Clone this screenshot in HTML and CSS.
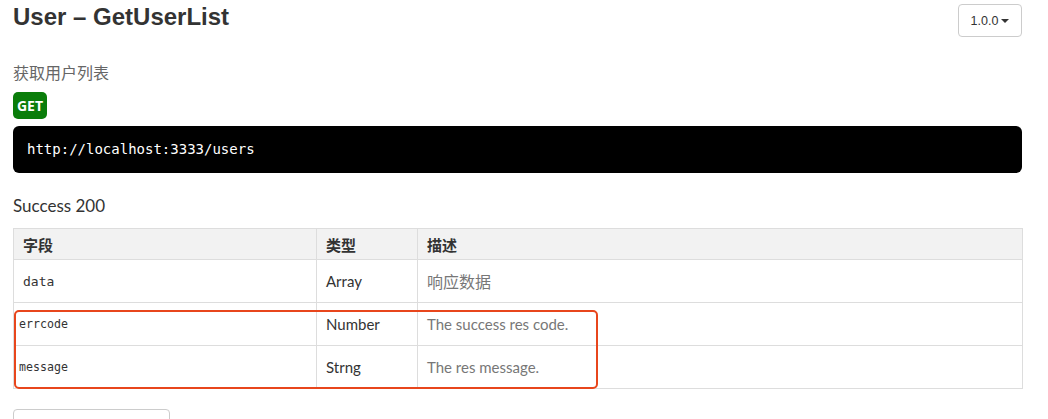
FILE: index.html
```html
<!DOCTYPE html>
<html>
<head>
<meta charset="utf-8">
<link rel="stylesheet" href="styles.css">
</head>
<body>
<div class="page">
  <div class="head">
    <h1 class="title">User – GetUserList</h1>
    <div class="version">1.0.0<span class="caret"></span></div>
  </div>
  <p class="desc">获取用户列表</p>
  <span class="badge">GET</span>
  <pre class="url">http://localhost:3333/users</pre>
  <h2 class="section">Success 200</h2>
  <div class="table-wrap">
    <table class="fields">
      <colgroup><col class="c1"><col class="c2"><col class="c3"></colgroup>
      <thead>
        <tr><th>字段</th><th>类型</th><th>描述</th></tr>
      </thead>
      <tbody>
        <tr><td class="code">data</td><td class="type">Array</td><td class="note cjk">响应数据</td></tr>
        <tr><td class="code small">errcode</td><td class="type">Number</td><td class="note">The success res code.</td></tr>
        <tr><td class="code small">message</td><td class="type">Strng</td><td class="note">The res message.</td></tr>
      </tbody>
    </table>
    <div class="highlight"></div>
  </div>
  <div class="next-btn"></div>
</div>
</body>
</html>
```
FILE: styles.css
```css
html, body { margin: 0; padding: 0; background: #fff; }
body { font-family: "Lato", "Noto Sans CJK SC", sans-serif; color: #333; }
.page { margin-left: 13px; width: 1009px; }
.head { display: flex; justify-content: space-between; align-items: flex-start; height: 52px; }
.title { margin: 0; padding-top: 2px; font-family: "Liberation Sans", "Noto Sans CJK SC", sans-serif; font-size: 24px; font-weight: 700; line-height: 30px; color: #333; }
.version { margin-top: 4px; box-sizing: border-box; width: 64px; height: 33px; border: 1px solid #ccc; border-radius: 4px; display: flex; align-items: center; justify-content: center; font-family: "Liberation Sans", sans-serif; font-size: 12.5px; color: #333; }
.caret { display: inline-block; margin-left: 3px; width: 0; height: 0; border-left: 4px solid transparent; border-right: 4px solid transparent; border-top: 4px solid #333; }
.desc { margin: 8px 0 0; font-family: "Noto Sans CJK SC", sans-serif; font-size: 16px; line-height: 24px; color: #666; }
.badge { display: inline-block; margin-top: 8px; width: 34px; height: 27px; line-height: 27px; text-align: center; background: #0a7d0a; color: #fff; border-radius: 5px; font-family: "Open Sans", sans-serif; font-weight: 700; font-size: 14px; }
.url { margin: 7px 0 0; box-sizing: border-box; height: 47px; line-height: 47px; padding: 0 14px; background: #000; color: #fff; border-radius: 6px; font-family: "DejaVu Sans Mono", monospace; font-size: 14px; font-weight: 400; }
.section { margin: 22px 0 0; font-family: "Lato", sans-serif; font-size: 17px; font-weight: 400; line-height: 22px; color: #333; }
.table-wrap { position: relative; margin-top: 11px; }
.fields { width: 1009px; border-collapse: collapse; table-layout: fixed; }
.c1 { width: 303px; } .c2 { width: 101px; } .c3 { width: 605px; }
.fields th, .fields td { border: 1px solid #ddd; padding: 0 9px; text-align: left; }
.fields th { height: 30px; background: #f2f2f2; font-family: "Noto Sans CJK SC", sans-serif; font-weight: 700; font-size: 15px; color: #333; }
.fields td { height: 42px; font-size: 15px; color: #333; }
.fields td.code { font-family: "DejaVu Sans Mono", monospace; font-size: 13px; vertical-align: middle; }
.fields td.code.small { font-size: 11.6px; padding-left: 5px; }
.fields td.type { font-family: "Lato", sans-serif; font-size: 15px; }
.fields td.note { font-family: "Lato", "Noto Sans CJK SC", sans-serif; font-size: 15px; color: #777; }
.fields td.note.cjk { font-family: "Noto Sans CJK SC", sans-serif; font-size: 16px; }
.highlight { position: absolute; left: 1px; top: 82px; width: 584px; height: 79px; box-sizing: border-box; border: 2px solid #e8461c; border-radius: 5px; pointer-events: none; }
.next-btn { margin-top: 20px; box-sizing: border-box; width: 157px; height: 34px; border: 1px solid #ccc; border-radius: 4px; }
```
